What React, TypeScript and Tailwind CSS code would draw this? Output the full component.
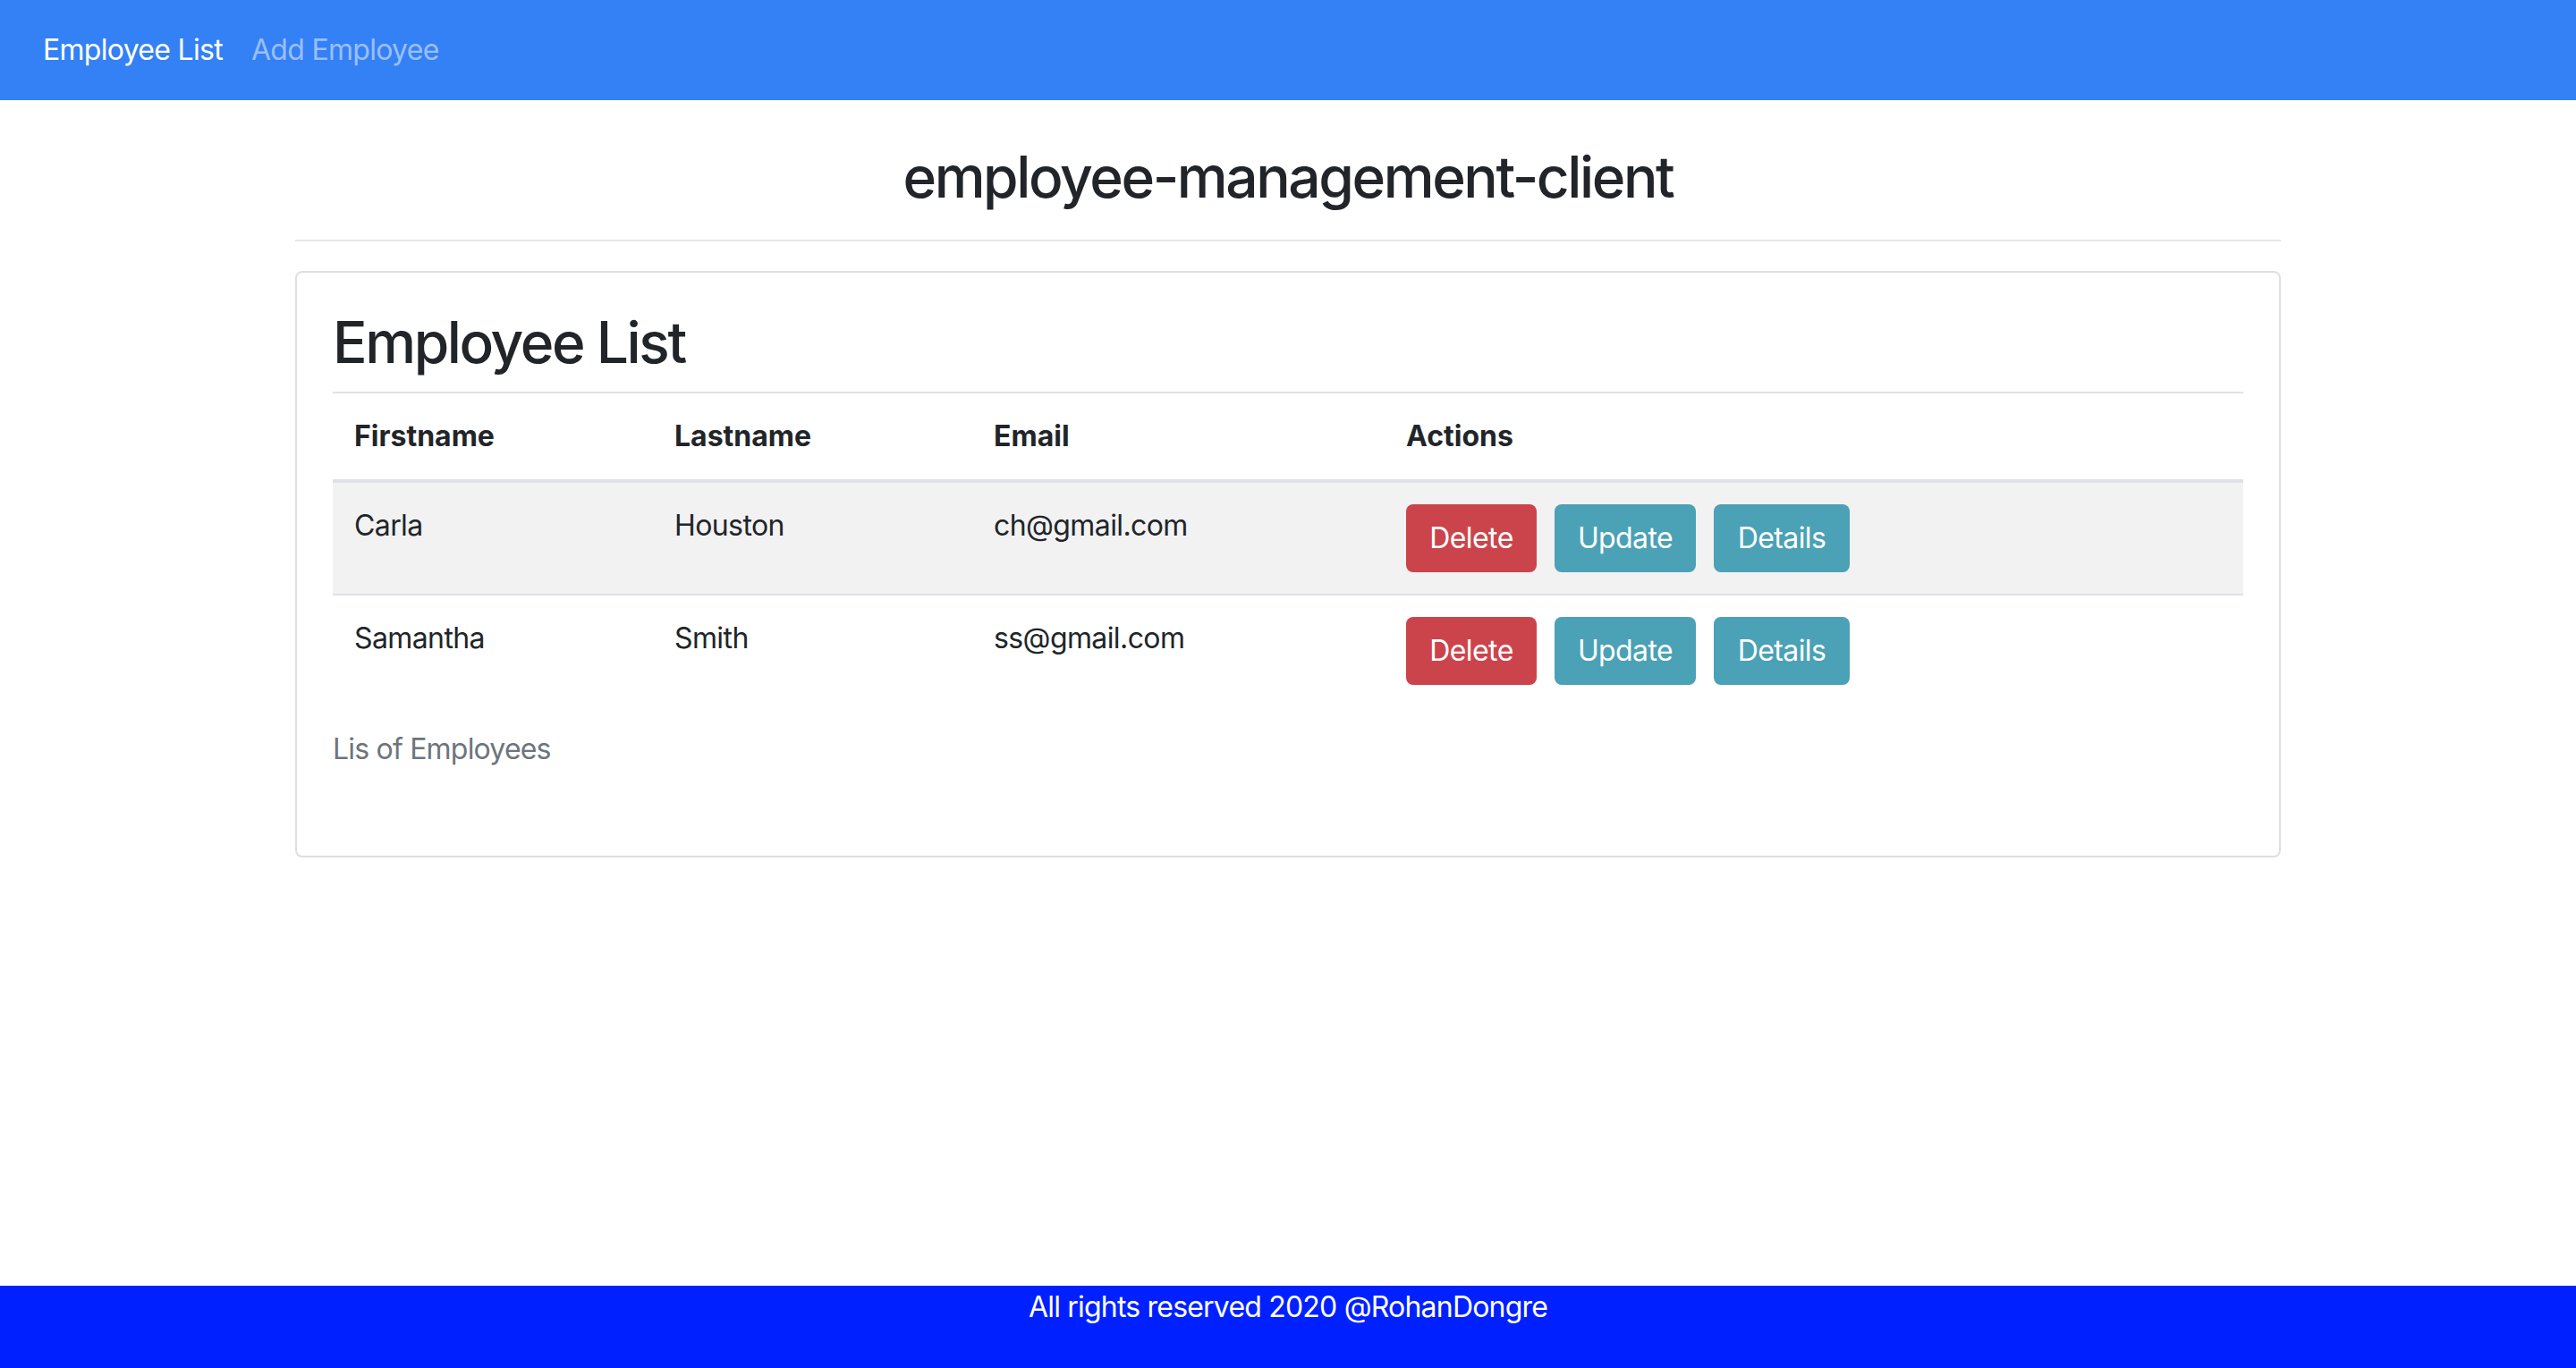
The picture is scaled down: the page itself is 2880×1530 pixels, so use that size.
import React from 'react'

type Employee = {
  id: number
  firstName: string
  lastName: string
  email: string
}

const employees: Employee[] = [
  { id: 1, firstName: 'Carla', lastName: 'Houston', email: 'ch@gmail.com' },
  { id: 2, firstName: 'Samantha', lastName: 'Smith', email: 'ss@gmail.com' },
]

function Header() {
  return (
    <nav className="h-[112px] bg-[#3480f5] flex items-center pl-[32px]">
      <a href="#" className="px-[16px] text-[32px] leading-[48px] tracking-[-0.7px] text-white">
        Employee List
      </a>
      <a href="#" className="px-[16px] text-[32px] leading-[48px] tracking-[-0.7px] text-white/50">
        Add Employee
      </a>
    </nav>
  )
}

function Footer() {
  return (
    <footer className="mt-auto h-[92px] bg-[#0020ff] text-center text-white text-[32px] leading-[48px] tracking-[-0.8px]">
      All rights reserved 2020 @RohanDongre
    </footer>
  )
}

function ActionButtons() {
  return (
    <div className="flex gap-[20px]">
      <button className="w-[146px] h-[76px] rounded-[8px] bg-[#cc444b] text-white text-[32px] leading-[48px]">
        Delete
      </button>
      <button className="w-[158px] h-[76px] rounded-[8px] bg-[#4ba1b6] text-white text-[32px] leading-[48px]">
        Update
      </button>
      <button className="w-[152px] h-[76px] rounded-[8px] bg-[#4ba1b6] text-white text-[32px] leading-[48px]">
        Details
      </button>
    </div>
  )
}

function EmployeeList() {
  return (
    <div className="border-2 border-[#dfdfdf] rounded-[8px] px-[40px] pt-[40px] pb-[95px]">
      <h2 className="text-[64px] leading-[1.2] font-medium tracking-[-2.4px] mb-[16px]">Employee List</h2>

      <table className="w-full text-left text-[32px] leading-[48px]">
        <colgroup>
          <col className="w-[358px]" />
          <col className="w-[357px]" />
          <col className="w-[461px]" />
          <col />
        </colgroup>
        <thead>
          <tr>
            <th className="p-[24px] font-bold border-t-2 border-b-4 border-[#dee2e6]">Firstname</th>
            <th className="p-[24px] font-bold border-t-2 border-b-4 border-[#dee2e6]">Lastname</th>
            <th className="p-[24px] font-bold border-t-2 border-b-4 border-[#dee2e6]">Email</th>
            <th className="p-[24px] font-bold border-t-2 border-b-4 border-[#dee2e6]">Actions</th>
          </tr>
        </thead>
        <tbody className="tracking-[-0.6px]">
          {employees.map((emp, i) => (
            <tr key={emp.id} className={i % 2 === 0 ? 'bg-[#f2f2f2]' : ''}>
              <td className="p-[24px] align-top border-t-2 border-[#dee2e6]">{emp.firstName}</td>
              <td className="p-[24px] align-top border-t-2 border-[#dee2e6]">{emp.lastName}</td>
              <td className="p-[24px] align-top border-t-2 border-[#dee2e6]">{emp.email}</td>
              <td className="p-[24px] align-top border-t-2 border-[#dee2e6]">
                <ActionButtons />
              </td>
            </tr>
          ))}
        </tbody>
      </table>

      <p className="mt-[24px] text-[32px] leading-[48px] tracking-[-0.8px] text-[#6c757d]">Lis of Employees</p>
    </div>
  )
}

export default function App() {
  return (
    <div
      className="min-h-screen flex flex-col bg-white text-[#212529]"
      style={{ fontFamily: 'Inter, "Noto Sans", sans-serif' }}
    >
      <Header />

      <main className="w-[2220px] mx-auto">
        <h1 className="mt-[48px] text-center text-[64px] leading-[1.2] font-medium tracking-[-2.4px]">
          employee-management-client
        </h1>
        <hr className="mt-[31px] mb-[33px] border-0 border-t-2 border-[#e6e6e6]" />
        <EmployeeList />
      </main>

      <Footer />
    </div>
  )
}
